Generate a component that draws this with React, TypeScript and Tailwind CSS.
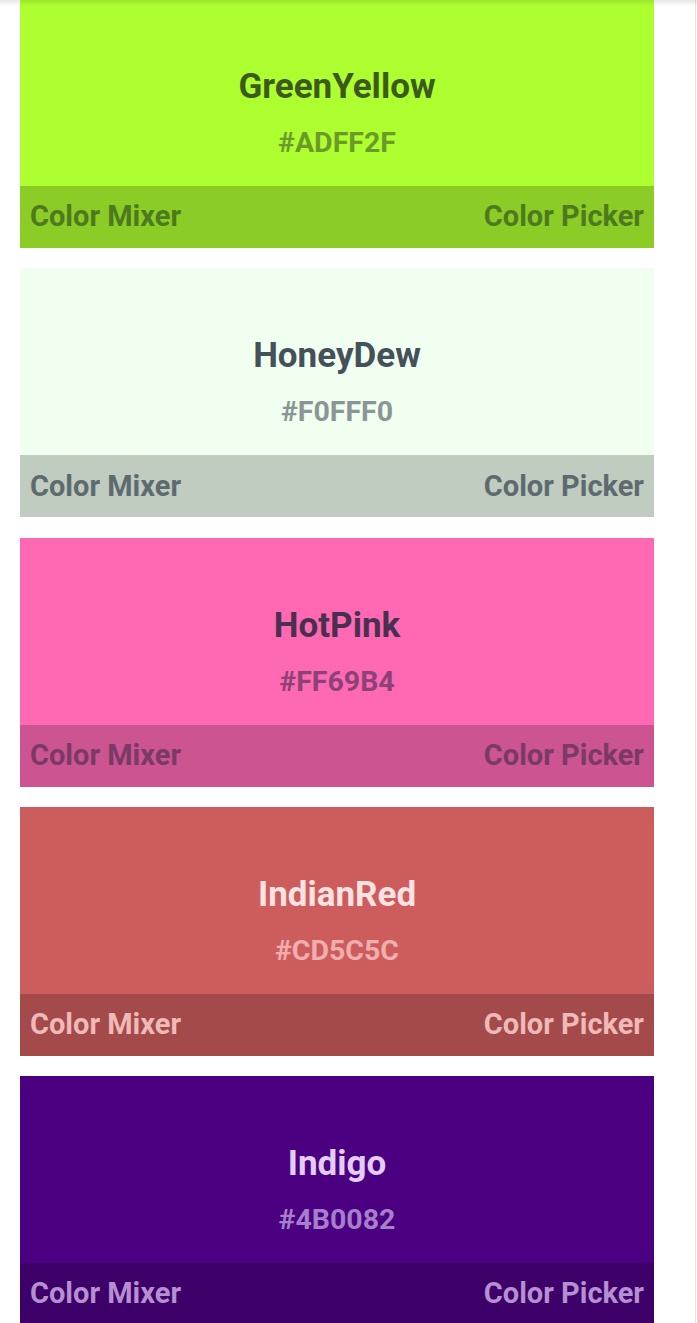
type Swatch = {
  name: string;
  hex: string;
  bg: string;
  bar: string;
  title: string;
  code: string;
  link: string;
};

const swatches: Swatch[] = [
  {
    name: "GreenYellow",
    hex: "#ADFF2F",
    bg: "bg-[#adff2f]",
    bar: "bg-[#8bcc26]",
    title: "text-[#3c5a1c]",
    code: "text-[#6c9a28]",
    link: "text-[#4d7a1e]",
  },
  {
    name: "HoneyDew",
    hex: "#F0FFF0",
    bg: "bg-[#f0fff0]",
    bar: "bg-[#c0ccc0]",
    title: "text-[#44505a]",
    code: "text-[#8a9596]",
    link: "text-[#5e6b6e]",
  },
  {
    name: "HotPink",
    hex: "#FF69B4",
    bg: "bg-[#ff69b4]",
    bar: "bg-[#cc5490]",
    title: "text-[#4a3050]",
    code: "text-[#8c4274]",
    link: "text-[#7a3a68]",
  },
  {
    name: "IndianRed",
    hex: "#CD5C5C",
    bg: "bg-[#cd5c5c]",
    bar: "bg-[#a44a4a]",
    title: "text-[#fde2e2]",
    code: "text-[#f1aeae]",
    link: "text-[#efb9b9]",
  },
  {
    name: "Indigo",
    hex: "#4B0082",
    bg: "bg-[#4b0082]",
    bar: "bg-[#3c0068]",
    title: "text-[#e4cdf4]",
    code: "text-[#a67fcb]",
    link: "text-[#b58fd0]",
  },
];

function SwatchCard({ s }: { s: Swatch }) {
  return (
    <div className="flex flex-col w-[634px]">
      <div className={`${s.bg} h-[187px] flex flex-col items-center pt-[66px]`}>
        <span className={`${s.title} text-[35px] leading-[44px] font-bold`}>
          {s.name}
        </span>
        <span className={`${s.code} text-[28.5px] leading-[36px] font-bold mt-[16px]`}>
          {s.hex}
        </span>
      </div>
      <div
        className={`${s.bar} h-[62px] flex items-center justify-between px-[10px] ${s.link} text-[29px] font-bold`}
      >
        <span>Color Mixer</span>
        <span>Color Picker</span>
      </div>
    </div>
  );
}

export default function App() {
  return (
    <div
      className="relative h-[1323px] w-[697px] overflow-hidden bg-white"
      style={{ fontFamily: "Roboto, 'Noto Sans', sans-serif" }}
    >
      <div className="flex h-full">
        <div className="w-[695px] pl-[20px] -mt-[1px] flex flex-col gap-[20.25px]">
          {swatches.map((s) => (
            <SwatchCard key={s.name} s={s} />
          ))}
        </div>
        <div className="w-[1px] h-full bg-[#e6e6e6]"></div>
      </div>
      {/* toolbar shadow */}
      <div className="pointer-events-none absolute inset-x-0 top-0 h-[6px] bg-linear-to-b from-black/10 to-transparent"></div>
    </div>
  );
}
